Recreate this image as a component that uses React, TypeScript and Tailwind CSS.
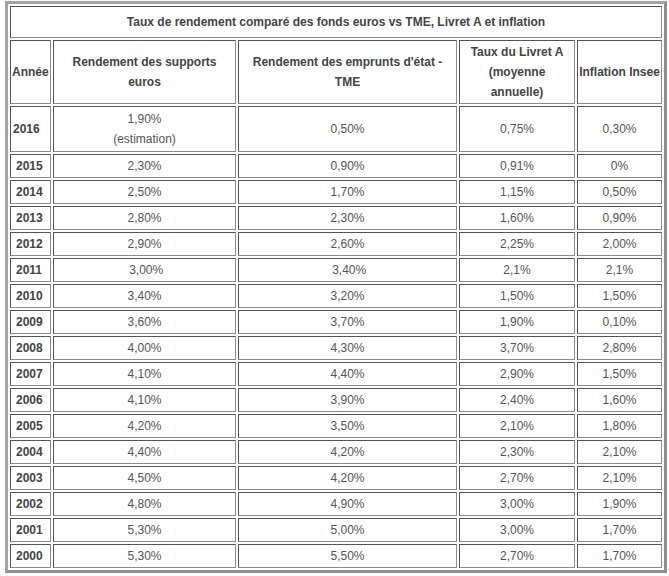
import { Fragment } from 'react';

interface Row {
  year: string;
  supports: React.ReactNode;
  emprunts: string;
  livret: string;
  inflation: string;
}

const rows: Row[] = [
  { year: '2015', supports: '2,30%', emprunts: '0,90%', livret: '0,91%', inflation: '0%' },
  { year: '2014', supports: '2,50%', emprunts: '1,70%', livret: '1,15%', inflation: '0,50%' },
  { year: '2013', supports: '2,80%', emprunts: '2,30%', livret: '1,60%', inflation: '0,90%' },
  { year: '2012', supports: '2,90%', emprunts: '2,60%', livret: '2,25%', inflation: '2,00%' },
  { year: '2011', supports: '\u00a03,00%', emprunts: '\u00a03,40%', livret: '2,1%', inflation: '2,1%' },
  { year: '2010', supports: '3,40%', emprunts: '3,20%', livret: '1,50%', inflation: '1,50%' },
  { year: '2009', supports: '3,60%', emprunts: '3,70%', livret: '1,90%', inflation: '0,10%' },
  { year: '2008', supports: '4,00%', emprunts: '4,30%', livret: '3,70%', inflation: '2,80%' },
  { year: '2007', supports: '4,10%', emprunts: '4,40%', livret: '2,90%', inflation: '1,50%' },
  { year: '2006', supports: '4,10%', emprunts: '3,90%', livret: '2,40%', inflation: '1,60%' },
  { year: '2005', supports: '4,20%', emprunts: '3,50%', livret: '2,10%', inflation: '1,80%' },
  { year: '2004', supports: '4,40%', emprunts: '4,20%', livret: '2,30%', inflation: '2,10%' },
  { year: '2003', supports: '4,50%', emprunts: '4,20%', livret: '2,70%', inflation: '2,10%' },
  { year: '2002', supports: '4,80%', emprunts: '4,90%', livret: '3,00%', inflation: '1,90%' },
  { year: '2001', supports: '5,30%', emprunts: '5,00%', livret: '3,00%', inflation: '1,70%' },
  { year: '2000', supports: '5,30%', emprunts: '5,50%', livret: '2,70%', inflation: '1,70%' },
];

// inset look of old border=1 tables
const cell =
  'border border-t-[#555] border-l-[#555] border-b-[#8c8c8c] border-r-[#8c8c8c] p-[1px] align-middle';

export default function App() {
  return (
    <div className="bg-white min-h-[576px] pt-[1px] pl-[5px] font-['Liberation_Sans',Arial,sans-serif] text-[12px] leading-[20px] text-[#555]">
      <table className="w-[662px] border-separate border-spacing-[2px] border-[3px] border-t-[#a3a3a3] border-l-[#a3a3a3] border-b-[#8f8f8f] border-r-[#8f8f8f]">
        <tbody>
          <tr>
            <th colSpan={5} className={`${cell} py-[5px] text-center font-bold text-[#444]`}>
              Taux de rendement comparé des fonds euros vs TME, Livret A et inflation
            </th>
          </tr>
          <tr className="font-bold text-[#444]">
            <th className={`${cell} w-[41px] text-left`}>Année</th>
            <th className={`${cell} w-[183px] text-center`}>
              Rendement des supports
              <br />
              euros
            </th>
            <th className={`${cell} w-[219px] text-center`}>
              Rendement des emprunts d'état -
              <br />
              TME
            </th>
            <th className={`${cell} w-[116px] text-center`}>
              Taux du Livret A
              <br />
              (moyenne
              <br />
              annuelle)
            </th>
            <th className={`${cell} w-[85px] text-center`}>Inflation Insee</th>
          </tr>
          <tr>
            <td className={`${cell} py-[2px] pl-[2px] font-bold text-[#444]`}>2016</td>
            <td className={`${cell} py-[2px] text-center`}>
              1,90%
              <br />
              (estimation)
            </td>
            <td className={`${cell} py-[2px] text-center`}>0,50%</td>
            <td className={`${cell} py-[2px] text-center`}>0,75%</td>
            <td className={`${cell} py-[2px] text-center`}>0,30%</td>
          </tr>
          {rows.map((r) => (
            <Fragment key={r.year}>
              <tr>
                <td className={`${cell} pl-[5px] font-bold text-[#444]`}>{r.year}</td>
                <td className={`${cell} text-center`}>{r.supports}</td>
                <td className={`${cell} text-center`}>{r.emprunts}</td>
                <td className={`${cell} text-center`}>{r.livret}</td>
                <td className={`${cell} text-center`}>{r.inflation}</td>
              </tr>
            </Fragment>
          ))}
        </tbody>
      </table>
    </div>
  );
}
